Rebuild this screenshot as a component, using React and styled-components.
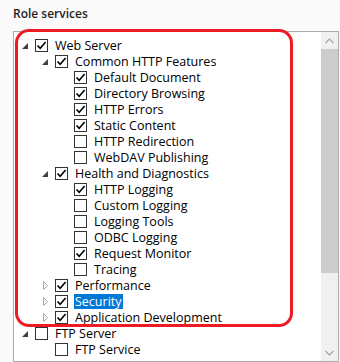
import React from 'react';
import styled, { createGlobalStyle } from 'styled-components';

const GlobalStyle = createGlobalStyle`
  html, body {
    margin: 0;
    padding: 0;
    background: #fafafa;
  }
  body {
    font-family: "Open Sans", "Noto Sans", "Liberation Sans", sans-serif;
    font-size: 12.5px;
    color: #000;
  }
`;

const Page = styled.div`
  width: 340px;
  height: 362px;
  box-sizing: border-box;
  padding: 0 1px 0 13px;
  position: relative;
  overflow: hidden;
`;

const Heading = styled.div`
  height: 31px;
  box-sizing: border-box;
  padding: 5px 0 0 0;
  font-weight: 600;
  font-size: 12px;
  color: #1f1f1f;
`;

const Panel = styled.div`
  display: flex;
  height: 331px;
  box-sizing: border-box;
  border: 1px solid #acacac;
  background: #fff;
`;

const List = styled.div`
  flex: 1;
  padding-top: 5px;
  overflow: hidden;
`;

const Row = styled.div`
  display: flex;
  align-items: center;
  height: 16px;
  padding-left: ${p => p.$indent}px;
`;

const Expander = styled.span`
  width: 21px;
  height: 16px;
  display: flex;
  align-items: center;
  justify-content: center;
  flex-shrink: 0;
`;

const Box = styled.span`
  width: 13px;
  height: 13px;
  box-sizing: border-box;
  border: 1px solid #333;
  background: #fff;
  display: flex;
  align-items: center;
  justify-content: center;
  flex-shrink: 0;
`;

const Label = styled.span`
  margin-left: 6px;
  padding: 0 1px;
  line-height: 15px;
  margin-top: 1px;
  white-space: nowrap;
  background: ${p => (p.$selected ? '#0078d7' : 'transparent')};
  color: ${p => (p.$selected ? '#fff' : '#000')};
`;

const Scrollbar = styled.div`
  width: 17px;
  display: flex;
  flex-direction: column;
  background: #f0f0f0;
`;

const ScrollButton = styled.div`
  height: 17px;
  display: flex;
  align-items: center;
  justify-content: center;
`;

const Thumb = styled.div`
  height: 224px;
  background: #cdcdcd;
`;

const Track = styled.div`
  flex: 1;
`;

const Annotation = styled.div`
  position: absolute;
  left: 15px;
  top: 29px;
  width: 278px;
  height: 298px;
  box-sizing: border-box;
  border: 3px solid #ed1c24;
  border-radius: 14px;
  pointer-events: none;
`;

const items = [
  { level: 0, open: true, checked: true, label: 'Web Server' },
  { level: 1, open: true, checked: true, label: 'Common HTTP Features' },
  { level: 2, checked: true, label: 'Default Document' },
  { level: 2, checked: true, label: 'Directory Browsing' },
  { level: 2, checked: true, label: 'HTTP Errors' },
  { level: 2, checked: true, label: 'Static Content' },
  { level: 2, checked: false, label: 'HTTP Redirection' },
  { level: 2, checked: false, label: 'WebDAV Publishing' },
  { level: 1, open: true, checked: true, label: 'Health and Diagnostics' },
  { level: 2, checked: true, label: 'HTTP Logging' },
  { level: 2, checked: false, label: 'Custom Logging' },
  { level: 2, checked: false, label: 'Logging Tools' },
  { level: 2, checked: false, label: 'ODBC Logging' },
  { level: 2, checked: true, label: 'Request Monitor' },
  { level: 2, checked: false, label: 'Tracing' },
  { level: 1, open: false, checked: true, label: 'Performance' },
  { level: 1, open: false, checked: true, label: 'Security', selected: true },
  { level: 1, open: false, checked: true, label: 'Application Development' },
  { level: 0, open: true, checked: false, label: 'FTP Server' },
  { level: 1, checked: false, label: 'FTP Service' },
];

const indents = [0, 20, 39];

function Arrow({ open }) {
  if (open === undefined) return null;
  if (open) {
    return (
      <svg width="6" height="6" viewBox="0 0 6 6" style={{ marginTop: 2, marginLeft: 1 }}>
        <path d="M6 0 L6 6 L0 6 Z" fill="#404040" />
      </svg>
    );
  }
  return (
    <svg width="5" height="9" viewBox="0 0 5 9" style={{ marginLeft: 1 }}>
      <path d="M0.5 0.5 L4.5 4.5 L0.5 8.5 Z" fill="none" stroke="#a6a6a6" strokeWidth="1" />
    </svg>
  );
}

function Check({ checked }) {
  return (
    <Box>
      {checked && (
        <svg width="11" height="11" viewBox="0 0 11 11">
          <path d="M1.5 5.5 L4.2 8.3 L9.6 2" fill="none" stroke="#000" strokeWidth="1.6" />
        </svg>
      )}
    </Box>
  );
}

export default function App() {
  return (
    <>
      <GlobalStyle />
      <Page>
        <Heading>Role services</Heading>
        <Panel>
          <List>
            {items.map((it, i) => (
              <Row key={i} $indent={indents[it.level]}>
                <Expander>
                  <Arrow open={it.open} />
                </Expander>
                <Check checked={it.checked} />
                <Label $selected={it.selected}>{it.label}</Label>
              </Row>
            ))}
          </List>
          <Scrollbar>
            <ScrollButton>
              <svg width="9" height="6" viewBox="0 0 9 6">
                <path d="M0.5 5 L4.5 1 L8.5 5" fill="none" stroke="#a3a3a3" strokeWidth="1.2" />
              </svg>
            </ScrollButton>
            <Thumb />
            <Track />
            <ScrollButton>
              <svg width="9" height="6" viewBox="0 0 9 6">
                <path d="M0.5 1 L4.5 5 L8.5 1" fill="none" stroke="#a3a3a3" strokeWidth="1.2" />
              </svg>
            </ScrollButton>
          </Scrollbar>
        </Panel>
        <Annotation />
      </Page>
    </>
  );
}
